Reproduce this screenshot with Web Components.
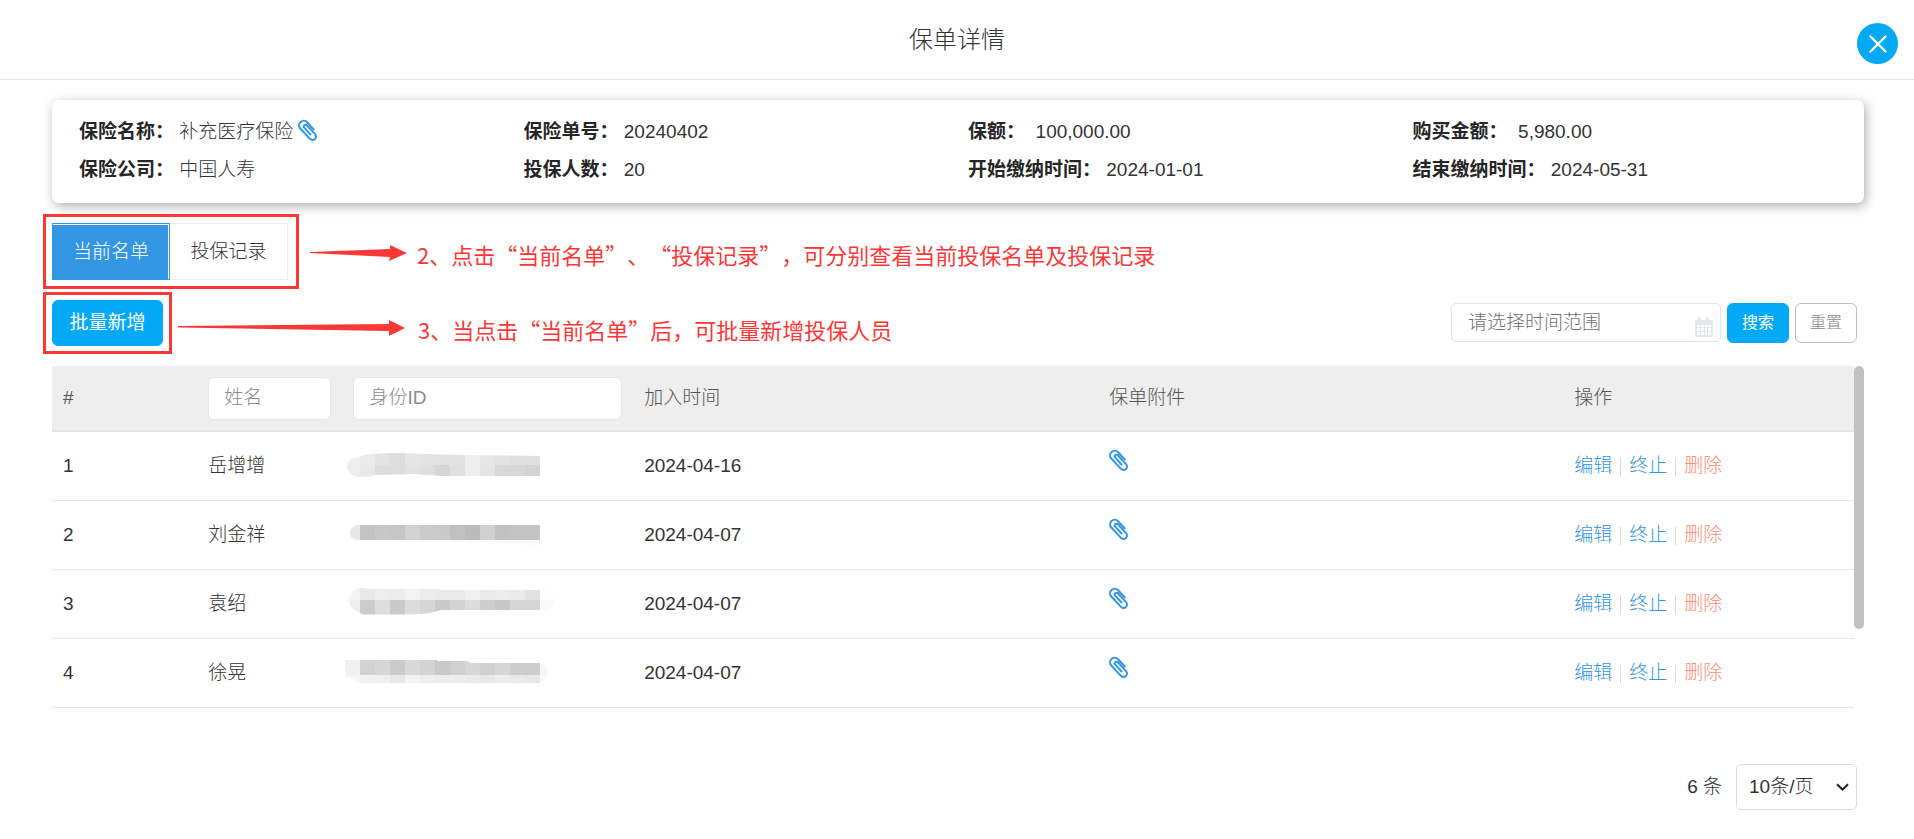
<!DOCTYPE html>
<html lang="zh-CN">
<head>
<meta charset="utf-8">
<meta name="viewport" content="width=device-width, initial-scale=1">
<title>保单详情</title>
<style>
  body {
    margin: 0;
    background: #fff;
    color: #333;
    font: 300 19px/30px "Liberation Sans", "Noto Sans CJK SC", sans-serif;
    --blue: #03a9f4;
    --link: #3296e2;
    --red: #fb3838;
    --line: #e2e5e8;
  }
</style>
</head>
<body>
<policy-page></policy-page>

<script>
const define = (name, html, setup) => {
  const template = document.createElement('template');
  template.innerHTML = html;
  customElements.define(name, class extends HTMLElement {
    constructor() {
      super();
      this.attachShadow({ mode: 'open' }).append(template.content.cloneNode(true));
    }
    connectedCallback() {
      if (setup) setup(this, this.shadowRoot);
    }
  });
};

define('clip-icon', `
  <style>
    :host { display: inline-block; width: 20px; height: 22px; color: var(--link); white-space: normal; }
    svg { display: block; }
  </style>
  <svg width="20" height="22" viewBox="-10 -11 20 22" fill="none" stroke="currentColor" stroke-width="2" stroke-linecap="round" aria-hidden="true">
    <path transform="rotate(-43)" d="M4.600 3.5V-6.300a4.600 4.600 0 0 0-9.200 0V7.800a3.500 3.500 0 0 0 7 0V-4.300a1.800 1.800 0 0 0-3.600 0V5"/>
  </svg>`);

define('dialog-header', `
  <style>
    :host { display: grid; grid-template-columns: 1fr auto 1fr; align-items: center; height: 79px; padding: 0 16px; border-bottom: 1px solid #e2e2e2; }
    h1 { grid-column: 2; margin: 0; font-size: 24px; font-weight: 300; line-height: 36px; }
    button { display: grid; place-items: center; justify-self: end; align-self: end; width: 41px; height: 41px; margin-bottom: 15px; padding: 0; border: 0; border-radius: 50%; background: var(--blue); }
  </style>
  <h1><slot></slot></h1>
  <button type="button" aria-label="关闭">
    <svg width="20" height="20" viewBox="0 0 20 20" stroke="#fff" stroke-width="2.4" stroke-linecap="round" aria-hidden="true"><path d="M2.5 2.5l15 15M17.5 2.5l-15 15"/></svg>
  </button>`);

define('info-item', `
  <style>
    :host { display: flex; align-items: center; height: 38px; white-space: pre; }
    b { font-weight: 700; color: #262626; }
    clip-icon { margin: 0 0 4px 5px; }
    clip-icon[hidden] { display: none; }
  </style>
  <b></b><span><slot></slot></span><clip-icon hidden></clip-icon>`,
  (host, root) => {
    root.querySelector('b').textContent = host.getAttribute('label') + '：';
    root.querySelector('clip-icon').hidden = !host.hasAttribute('clip');
  });

define('info-card', `
  <style>
    :host { display: grid; grid-template-columns: repeat(4, 1fr); padding: 13px 7px 14px 27px; border-radius: 7px; background: #fff; box-shadow: 2px 3px 12px rgba(0, 0, 0, .32); }
  </style>
  <slot></slot>`);

define('mark-frame', `
  <style>
    :host { display: flex; flex: none; border: 3px solid var(--red); padding: 6px 8px 6px 6px; }
    :host([compact]) { padding: 5px 6px; }
  </style>
  <slot></slot>`);

define('mark-note', `
  <style>
    :host { display: flex; align-items: center; gap: 6px; color: var(--red); font: 400 22px/30px "Noto Sans CJK SC", sans-serif; text-spacing-trim: space-all; white-space: nowrap; padding-top: 3px; }
    :host([long]) { padding-top: 10px; }
    svg { flex: none; fill: var(--red); }
    .long, :host([long]) .short { display: none; }
    :host([long]) .long { display: block; }
    p { margin: 2px 0 0; }
  </style>
  <svg class="short" width="106" height="20" aria-hidden="true"><path d="M5 9l80-3V2l17 8-18 8 1-4-80-4z"/></svg>
  <svg class="long" width="234" height="20" aria-hidden="true"><path d="M0 8l211-2V2l16 8-16 8v-5L0 9.500z"/></svg>
  <p><slot></slot></p>`);

define('tab-switch', `
  <style>
    :host { display: block; }
    div { display: flex; }
    button { box-sizing: border-box; width: 118px; height: 57px; padding: 0; border: 1px solid #ebebeb; border-left: 0; background: #fff; color: #333; font: inherit; }
    button[aria-selected=true] { border: 1px solid var(--link); background: var(--link); color: #fff; box-shadow: inset -1px 1px #fff; }
  </style>
  <div role="tablist">
    <button type="button" role="tab" aria-selected="true">当前名单</button>
    <button type="button" role="tab" aria-selected="false">投保记录</button>
  </div>`);

define('action-button', `
  <style>
    :host { display: block; }
    button { display: block; height: 40px; padding: 0 14px; border: 1px solid var(--blue); border-radius: 6px; background: var(--blue); color: #fff; font: 400 16px/24px "Liberation Sans", "Noto Sans CJK SC", sans-serif; }
    :host([large]) button { min-width: 111px; height: 46px; padding: 0 16px; font-size: 19px; }
    :host([plain]) button { border-color: #bdbdbd; background: #fff; color: #888; font-weight: 300; }
  </style>
  <button type="button"><slot></slot></button>`);

define('date-filter', `
  <style>
    :host { display: grid; grid-template: 39px / 270px; }
    input, svg { grid-area: 1 / 1; }
    input { box-sizing: border-box; width: 100%; height: 39px; padding: 0 40px 0 16px; border: 1px solid var(--line); border-radius: 5px; background: #fff; color: inherit; font: inherit; }
    input::placeholder { color: #6f6f6f; opacity: 1; }
    svg { justify-self: end; align-self: end; margin: 0 7px 5px 0; pointer-events: none; }
  </style>
  <input type="text" aria-label="时间范围" placeholder="请选择时间范围">
  <svg width="20" height="20" viewBox="0 0 20 20" aria-hidden="true">
    <path fill="#e4e7eb" fill-rule="evenodd" d="M2 3h2V1.500a1.500 1.500 0 0 1 3 0V3h5V1.500a1.500 1.500 0 0 1 3 0V3h2a2 2 0 0 1 2 2v13a2 2 0 0 1-2 2H3a2 2 0 0 1-2-2V4zM3 8v2h3V8zm4 0v2h3V8zm4 0v2h2V8zm3 0v2h3V8zM3 11v3h3v-3zm4 0v3h3v-3zm4 0v3h2v-3zm3 0v3h3v-3zM3 15v3h3v-3zm4 0v3h3v-3zm4 0v3h2v-3zm3 0v3h3v-3z"/>
  </svg>`);

/* Identity numbers are hidden behind grey blocks: an outline filled with bands of shades. */
const MASKS = [
  { outline: 'M2 18Q3 10 13 9Q22 5 32 6L44 5H58L81 6L118 7L195 8V28H97L69 26L30 27Q24 29 14 29Q3 28 2 18Z',
    bands: [[0, 17, 'f0ebe3dde6e3e2e2eee7e3e0e0'], [17, 36, 'ede8dddde2dfd6e0eee4d8d8d4']] },
  { outline: 'M5 16Q5 9 12 8H195V28L160 27L120 25H60L12 23Q5 22 5 16Z',
    bands: [[0, 23, 'e8c3c8c6d2cbcac0bbd0c2c4c4'], [23, 36, 'fcfcfcfcfcfcfcfafafafafafa']] },
  { outline: 'M4 15Q5 3 16 2L26 3H94L96 4H200Q209 6 209 15Q208 23 200 24H96L85 27Q75 28 60 28.500H18Q5 24 4 15Z',
    bands: [[0, 14, 'f3e9eeecf3eceaeaf0eaeceae2fc'], [14, 36, 'eeccddcadcd6c9d3dccdc8d6d6fa']] },
  { outline: 'M0 5H92V6H122L126 8H195Q202 10 202 18Q200 26 194 28H15Q10 26 7 23H0Z',
    bands: [[0, 20, 'f1d2d7cbd9d3c9cfd6d0d6cdcdf6'], [20, 36, 'f6f1efe8f3eeededeae8edeae8f8']] }
];
define('masked-id', `
  <style>:host { display: block; } svg { display: block; }</style>
  <svg width="210" height="36" role="img" aria-label="身份ID已隐藏"></svg>`,
  (host, root) => {
    const mask = MASKS[+host.getAttribute('shape')];
    const rects = mask.bands.flatMap(([top, bottom, shades]) => shades.match(/../g).map((s, i) =>
      `<rect x="${i * 15}" y="${top}" width="15" height="${bottom - top}" fill="#${s + s + s}"/>`));
    root.querySelector('svg').innerHTML =
      `<clipPath id="c"><path d="${mask.outline}"/></clipPath><g clip-path="url(#c)" shape-rendering="crispEdges">${rects.join('')}</g>`;
  });

define('member-table', `
  <style>
    :host { display: flex; align-items: flex-start; }
    table { flex: 1; min-width: 0; table-layout: fixed; border-collapse: separate; border-spacing: 0; }
    th, td { box-sizing: border-box; padding: 0 11px; text-align: left; font-weight: 300; border-bottom: 1px solid #e3e5e7; }
    th { height: 66px; background: #eee; color: #555; border-bottom: 2px solid #e1e5e9; }
    td { height: 69px; }
    td.mask { padding: 0 3px; }
    input { display: block; box-sizing: border-box; width: 100%; height: 43px; padding: 0 15px; border: 1px solid #e4e7ea; border-radius: 6px; background: #fff; font: inherit; }
    input::placeholder { color: #8c8c8c; opacity: 1; }
    clip-icon { display: block; margin-bottom: 12px; }
    nav { display: flex; align-items: center; }
    a { color: var(--link); text-decoration: none; }
    a + a { margin-left: 8px; padding-left: 9px; background: linear-gradient(#d8dbde, #d8dbde) 0 7px / 1px 18px no-repeat; }
    a.danger { color: #ff8b76; }
    .thumb { flex: none; width: 10px; height: 263px; border-radius: 5px; background: #c1c1c1; }
  </style>
  <table>
    <colgroup><col style="width:8.06%"><col style="width:8.06%"><col style="width:16.13%"><col style="width:25.81%"><col style="width:25.81%"><col style="width:16.13%"></colgroup>
    <thead><tr>
      <th scope="col">#</th>
      <th scope="col"><input type="text" aria-label="姓名" placeholder="姓名"></th>
      <th scope="col"><input type="text" aria-label="身份ID" placeholder="身份ID"></th>
      <th scope="col">加入时间</th><th scope="col">保单附件</th><th scope="col">操作</th>
    </tr></thead>
    <tbody></tbody>
  </table>
  <div class="thumb"></div>`,
  (host, root) => {
    const people = [['岳增增', '2024-04-16'], ['刘金祥', '2024-04-07'], ['袁绍', '2024-04-07'], ['徐晃', '2024-04-07']];
    root.querySelector('tbody').innerHTML = people.map(([name, date], i) => `
      <tr><td>${i + 1}</td><td>${name}</td><td class="mask"><masked-id shape="${i}"></masked-id></td><td>${date}</td>
      <td><clip-icon></clip-icon></td>
      <td><nav><a href="#edit">编辑</a><a href="#stop">终止</a><a class="danger" href="#delete">删除</a></nav></td></tr>`).join('');
  });

define('page-size', `
  <style>
    :host { display: flex; justify-content: flex-end; align-items: center; gap: 14px; }
    label { display: grid; width: 121px; }
    select, svg { grid-area: 1 / 1; }
    select { appearance: none; height: 46px; padding: 0 12px; border: 1px solid #dadcdf; border-radius: 5px; background: #fff; color: inherit; font: inherit; }
    svg { justify-self: end; align-self: center; margin-right: 8px; pointer-events: none; }
  </style>
  <span>6 条</span>
  <label>
    <select aria-label="每页条数"><option>10条/页</option></select>
    <svg width="13" height="8" viewBox="0 0 13 8" fill="none" stroke="#222" stroke-width="2" aria-hidden="true"><path d="M1 1.200l5.500 5.300L12 1.200"/></svg>
  </label>`);

define('policy-page', `
  <style>
    :host { display: block; }
    main { padding: 20px 50px 29px 43px; }
    info-card, member-table { margin-left: 9px; }
    .row { display: flex; gap: 6px; }
    .tabs { margin-top: 11px; }
    .tools { margin: 3px 7px 12px 0; }
    .filters { display: flex; gap: 6px; margin: 11px 0 0 auto; }
    page-size { margin: 56px 7px 0 0; }
  </style>
  <dialog-header>保单详情</dialog-header>
  <main>
    <info-card>
      <info-item label="保险名称" clip> 补充医疗保险</info-item>
      <info-item label="保险单号"> 20240402</info-item>
      <info-item label="保额">  100,000.00</info-item>
      <info-item label="购买金额">  5,980.00</info-item>
      <info-item label="保险公司"> 中国人寿</info-item>
      <info-item label="投保人数"> 20</info-item>
      <info-item label="开始缴纳时间"> 2024-01-01</info-item>
      <info-item label="结束缴纳时间"> 2024-05-31</info-item>
    </info-card>
    <div class="row tabs">
      <mark-frame><tab-switch></tab-switch></mark-frame>
      <mark-note>2、点击“当前名单”、“投保记录”，可分别查看当前投保名单及投保记录</mark-note>
    </div>
    <div class="row tools">
      <mark-frame compact><action-button large>批量新增</action-button></mark-frame>
      <mark-note long>3、当点击“当前名单”后，可批量新增投保人员</mark-note>
      <div class="filters">
        <date-filter></date-filter>
        <action-button>搜索</action-button>
        <action-button plain>重置</action-button>
      </div>
    </div>
    <member-table></member-table>
    <page-size></page-size>
  </main>`);
</script>
</body>
</html>
